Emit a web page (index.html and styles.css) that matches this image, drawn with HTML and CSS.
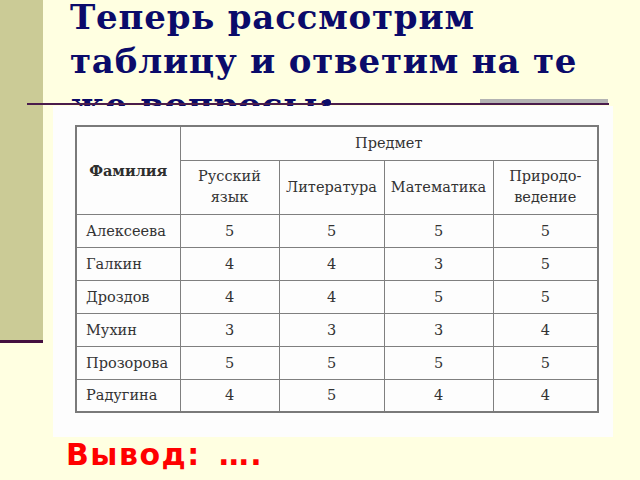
FILE: index.html
```html
<!DOCTYPE html>
<html lang="ru">
<head>
<meta charset="utf-8">
<title>Теперь рассмотрим таблицу</title>
<link rel="stylesheet" href="styles.css">
</head>
<body>
<div class="slide">
  <div class="sidebar"></div>
  <div class="rule-shade"></div>
  <div class="rule"></div>
  <div class="rule-dot"></div>

  <h1 class="title">Теперь рассмотрим<br>таблицу и ответим на те<br>же вопросы:</h1>

  <div class="figure">
    <table class="grades">
      <colgroup>
        <col class="c-name">
        <col class="c-rus">
        <col class="c-lit">
        <col class="c-mat">
        <col class="c-nat">
      </colgroup>
      <thead>
        <tr class="r-top">
          <th rowspan="2" class="h-name">Фамилия</th>
          <th colspan="4" class="h-subj">Предмет</th>
        </tr>
        <tr class="r-sub">
          <th>Русский<br>язык</th>
          <th>Литература</th>
          <th>Математика</th>
          <th>Природо-<br>ведение</th>
        </tr>
      </thead>
      <tbody>
        <tr><td class="name">Алексеева</td><td>5</td><td>5</td><td>5</td><td>5</td></tr>
        <tr><td class="name">Галкин</td><td>4</td><td>4</td><td>3</td><td>5</td></tr>
        <tr><td class="name">Дроздов</td><td>4</td><td>4</td><td>5</td><td>5</td></tr>
        <tr><td class="name">Мухин</td><td>3</td><td>3</td><td>3</td><td>4</td></tr>
        <tr><td class="name">Прозорова</td><td>5</td><td>5</td><td>5</td><td>5</td></tr>
        <tr><td class="name">Радугина</td><td>4</td><td>5</td><td>4</td><td>4</td></tr>
      </tbody>
    </table>
  </div>

  <p class="conclusion">Вывод: ….</p>
</div>
</body>
</html>
```

FILE: styles.css
```css
html, body {
  margin: 0;
  padding: 0;
  background: #ffffe1;
}

.slide {
  position: relative;
  width: 640px;
  height: 480px;
  overflow: hidden;
  background: #ffffe1;
}

.sidebar {
  position: absolute;
  left: 0;
  top: 0;
  width: 43px;
  height: 340px;
  background: #cbcb96;
  border-bottom: 3px solid #44103f;
}

.rule-shade {
  position: absolute;
  left: 480px;
  top: 99px;
  width: 128px;
  height: 5px;
  background: #b3b3b3;
  z-index: 2;
}

.rule {
  position: absolute;
  left: 27px;
  top: 103px;
  width: 582px;
  height: 2px;
  background: #4a1c4c;
  z-index: 3;
}

.rule-dot {
  position: absolute;
  left: 324px;
  top: 99px;
  width: 7px;
  height: 7px;
  border-radius: 50%;
  background: #0d0d6b;
  z-index: 3;
}

.title {
  position: relative;
  z-index: 1;
  margin: -5px 0 0 0;
  padding-left: 70px;
  height: 111px;
  font-family: "DejaVu Serif", "Liberation Serif", serif;
  font-weight: bold;
  font-size: 34px;
  letter-spacing: 0.8px;
  line-height: 44px;
  color: #0b0b6a;
  white-space: nowrap;
}

.figure {
  position: relative;
  z-index: 2;
  box-sizing: border-box;
  margin-left: 53px;
  width: 560px;
  height: 331px;
  padding: 19px 0 0 22px;
  background: #fdfdfd;
}

.grades {
  border-collapse: collapse;
  table-layout: fixed;
  width: 522px;
  font-family: "DejaVu Serif", "Liberation Serif", serif;
  font-size: 14.5px;
  color: #333;
  border: 2px solid #7a7a7a;
}

.c-name { width: 104px; }
.c-rus { width: 99px; }
.c-lit { width: 105px; }
.c-mat { width: 109px; }
.c-nat { width: 105px; }

.grades th,
.grades td {
  border: 1px solid #7f7f7f;
  padding: 0;
  text-align: center;
  vertical-align: middle;
  font-weight: normal;
}

.grades th {
  line-height: 21px;
}

.grades .h-name {
  font-weight: bold;
  color: #2e2e2e;
}

.r-top { height: 34px; }
.r-sub { height: 54px; }

.grades tbody tr { height: 33px; }

.grades td.name {
  text-align: left;
  padding-left: 9px;
}

.conclusion {
  margin: 0 0 0 66px;
  font-family: "DejaVu Sans", "Liberation Sans", sans-serif;
  font-weight: bold;
  font-size: 30px;
  letter-spacing: 1.5px;
  word-spacing: 6px;
  line-height: 36px;
  color: #ff0000;
}
```
